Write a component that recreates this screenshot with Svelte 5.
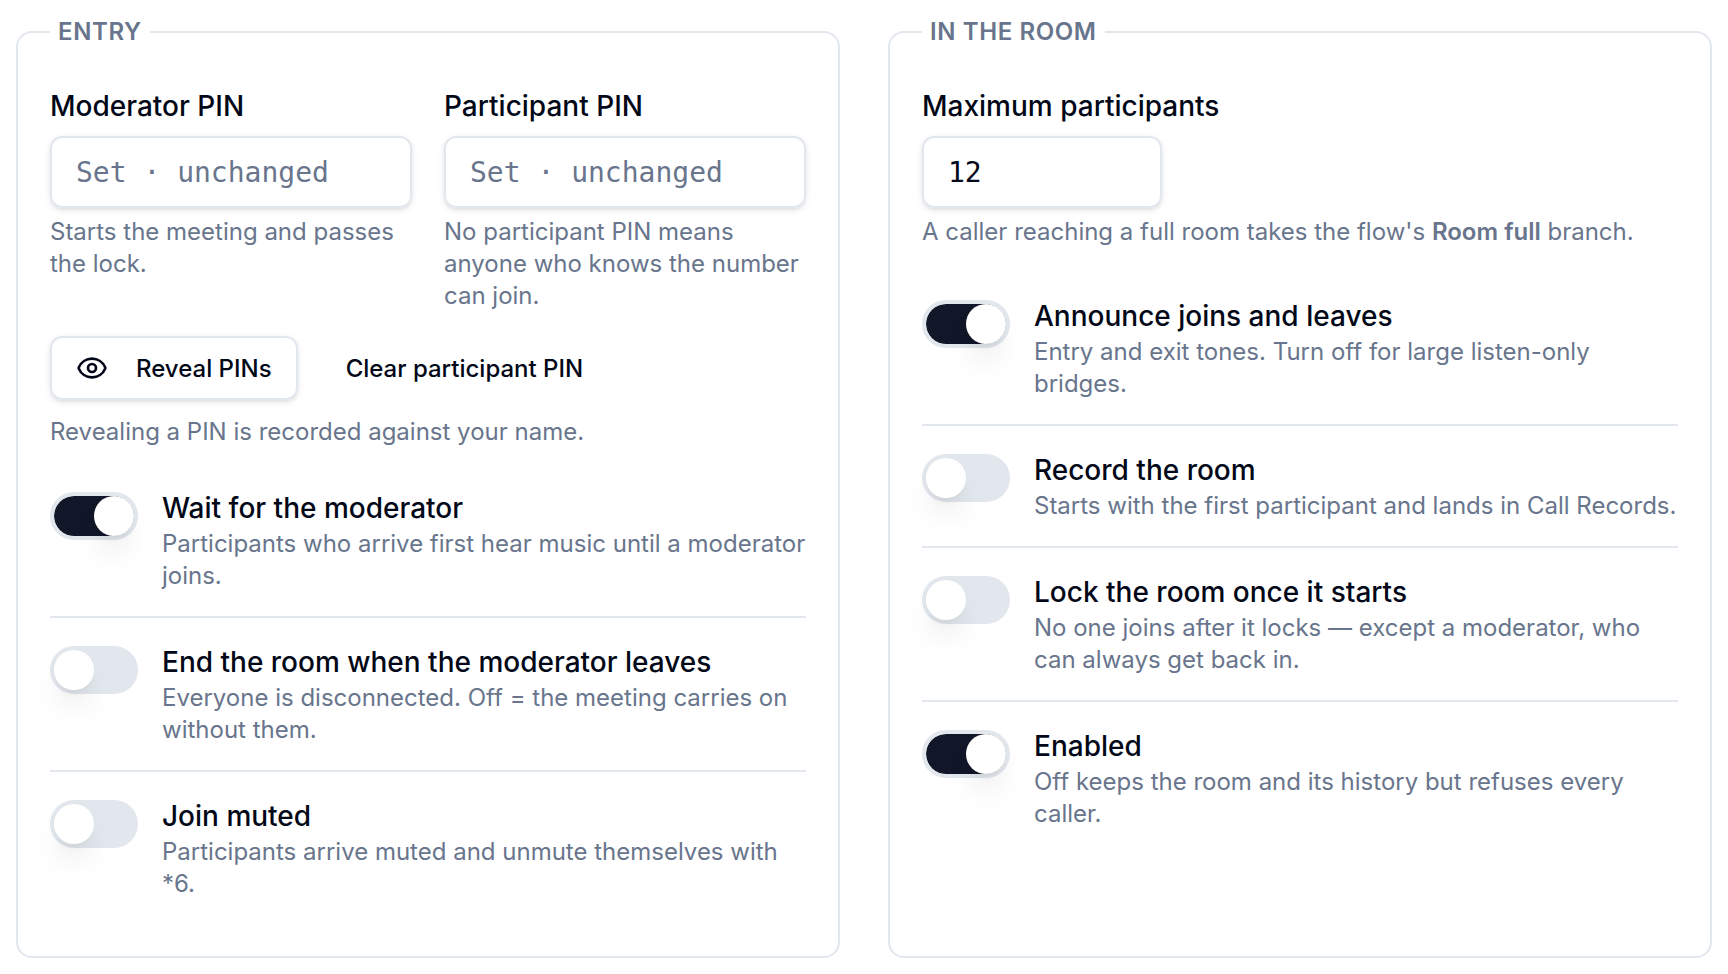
<script lang="ts">
  type Toggle = { id: string; title: string; help: string; on: boolean };

  let moderatorPin = $state('');
  let participantPin = $state('');
  let maxParticipants = $state('12');

  let entryToggles = $state<Toggle[]>([
    {
      id: 'wait-moderator',
      title: 'Wait for the moderator',
      help: 'Participants who arrive first hear music until a moderator joins.',
      on: true,
    },
    {
      id: 'end-on-leave',
      title: 'End the room when the moderator leaves',
      help: 'Everyone is disconnected. Off = the meeting carries on without them.',
      on: false,
    },
    {
      id: 'join-muted',
      title: 'Join muted',
      help: 'Participants arrive muted and unmute themselves with *6.',
      on: false,
    },
  ]);

  let roomToggles = $state<Toggle[]>([
    {
      id: 'announce',
      title: 'Announce joins and leaves',
      help: 'Entry and exit tones. Turn off for large listen-only bridges.',
      on: true,
    },
    {
      id: 'record',
      title: 'Record the room',
      help: 'Starts with the first participant and lands in Call Records.',
      on: false,
    },
    {
      id: 'lock',
      title: 'Lock the room once it starts',
      help: 'No one joins after it locks — except a moderator, who can always get back in.',
      on: false,
    },
    {
      id: 'enabled',
      title: 'Enabled',
      help: 'Off keeps the room and its history but refuses every caller.',
      on: true,
    },
  ]);
</script>

{#snippet toggleList(toggles: Toggle[])}
  <div class="toggles">
    {#each toggles as toggle (toggle.id)}
      <div class="toggle-row">
        <input
          id={toggle.id}
          class="switch"
          type="checkbox"
          role="switch"
          aria-describedby="{toggle.id}-help"
          bind:checked={toggle.on}
        />
        <div class="toggle-text">
          <label for={toggle.id}>{toggle.title}</label>
          <p class="help" id="{toggle.id}-help">{toggle.help}</p>
        </div>
      </div>
    {/each}
  </div>
{/snippet}

<form class="settings">
  <fieldset>
    <legend>Entry</legend>
    <div class="pins">
      <div class="field">
        <label for="moderator-pin">Moderator PIN</label>
        <input
          id="moderator-pin"
          class="text-input"
          type="text"
          placeholder="Set · unchanged"
          autocomplete="off"
          bind:value={moderatorPin}
        />
        <p class="help">Starts the meeting and passes the lock.</p>
      </div>
      <div class="field">
        <label for="participant-pin">Participant PIN</label>
        <input
          id="participant-pin"
          class="text-input"
          type="text"
          placeholder="Set · unchanged"
          autocomplete="off"
          bind:value={participantPin}
        />
        <p class="help">No participant PIN means anyone who knows the number can join.</p>
      </div>
    </div>
    <div class="pin-actions">
      <button type="button" class="outline">
        <svg viewBox="0 0 24 24" aria-hidden="true">
          <path
            d="M2.062 12.348a1 1 0 0 1 0-.696 10.75 10.75 0 0 1 19.876 0 1 1 0 0 1 0 .696 10.75 10.75 0 0 1-19.876 0"
          />
          <circle cx="12" cy="12" r="3" />
        </svg>
        Reveal PINs
      </button>
      <button type="button" class="ghost">Clear participant PIN</button>
    </div>
    <p class="help">Revealing a PIN is recorded against your name.</p>
    <div class="after-note">
      {@render toggleList(entryToggles)}
    </div>
  </fieldset>

  <fieldset>
    <legend>In the room</legend>
    <div class="field">
      <label for="max-participants">Maximum participants</label>
      <input
        id="max-participants"
        class="text-input short"
        type="text"
        inputmode="numeric"
        bind:value={maxParticipants}
      />
      <p class="help">
        A caller reaching a full room takes the flow's <strong>Room full</strong> branch.
      </p>
    </div>
    <div class="after-field">
      {@render toggleList(roomToggles)}
    </div>
  </fieldset>
</form>

<style>
  :global(body) {
    background: #fff;
  }

  .settings {
    --text: #020817;
    --muted: #68758c;
    --border: #e2e7ee;
    --primary: #111729;
    --shadow: 0 2px 6px rgb(0 0 0 / 0.1), 0 2px 4px -2px rgb(0 0 0 / 0.1);
    display: grid;
    grid-template-columns: repeat(2, minmax(0, 1fr));
    gap: 48px;
    padding: 16px;
    font-family: Inter, sans-serif;
    color: var(--text);
  }

  fieldset {
    min-width: 0;
    margin: 0;
    padding: 40px 32px 32px;
    border: 2px solid var(--border);
    border-radius: 16px;
  }

  legend {
    padding: 0 8px;
    font-size: 24px;
    font-weight: 600;
    line-height: 32px;
    letter-spacing: 0.025em;
    text-transform: uppercase;
    color: var(--muted);
  }

  .pins {
    display: grid;
    grid-template-columns: 1fr 1fr;
    gap: 32px;
  }

  .field {
    display: flex;
    flex-direction: column;
    align-items: flex-start;
  }

  label {
    font-size: 28px;
    font-weight: 500;
    line-height: 36px;
  }

  .text-input {
    box-sizing: border-box;
    width: 100%;
    height: 72px;
    margin: 12px 0 8px;
    padding: 0 24px;
    border: 2px solid var(--border);
    border-radius: 12px;
    background: transparent;
    box-shadow: var(--shadow);
    font-family: 'DejaVu Sans Mono', monospace;
    font-size: 28px;
    color: var(--text);
  }

  .text-input::placeholder {
    color: var(--muted);
    opacity: 1;
  }

  .text-input.short {
    width: 240px;
  }

  .help {
    margin: 0;
    font-size: 24px;
    line-height: 32px;
    color: var(--muted);
  }

  .help strong {
    font-weight: 600;
  }

  .pin-actions {
    display: flex;
    gap: 24px;
    margin: 24px 0 16px;
  }

  button {
    display: inline-flex;
    align-items: center;
    box-sizing: border-box;
    height: 64px;
    padding: 0 24px;
    border: 0;
    border-radius: 12px;
    background: transparent;
    font-family: inherit;
    font-size: 24px;
    font-weight: 500;
    color: var(--text);
    cursor: pointer;
  }

  .outline {
    gap: 28px;
    border: 2px solid var(--border);
    box-shadow: var(--shadow);
  }

  .outline svg {
    width: 32px;
    height: 32px;
    fill: none;
    stroke: currentColor;
    stroke-width: 2;
    stroke-linecap: round;
    stroke-linejoin: round;
  }

  .after-note {
    margin-top: 16px;
  }

  .after-field {
    margin-top: 24px;
  }

  .toggle-row {
    display: flex;
    align-items: flex-start;
    gap: 24px;
    padding: 24px 0;
  }

  .toggle-row + .toggle-row {
    border-top: 2px solid var(--border);
  }

  .toggle-text {
    flex: 1;
    min-width: 0;
  }

  .toggle-text label {
    display: block;
    line-height: 40px;
  }

  .switch {
    appearance: none;
    flex: none;
    box-sizing: border-box;
    width: 88px;
    height: 48px;
    margin: 4px 0 0;
    border: 4px solid var(--border);
    border-radius: 24px;
    background: var(--border);
    cursor: pointer;
  }

  .switch::before {
    content: '';
    display: block;
    width: 40px;
    height: 40px;
    border-radius: 50%;
    background: #fff;
    box-shadow: 0 20px 30px -6px rgb(0 0 0 / 0.1), 0 8px 12px -8px rgb(0 0 0 / 0.1);
    transition: transform 150ms ease;
  }

  .switch:checked {
    background: var(--primary) padding-box;
  }

  .switch:checked::before {
    transform: translateX(40px);
  }
</style>
